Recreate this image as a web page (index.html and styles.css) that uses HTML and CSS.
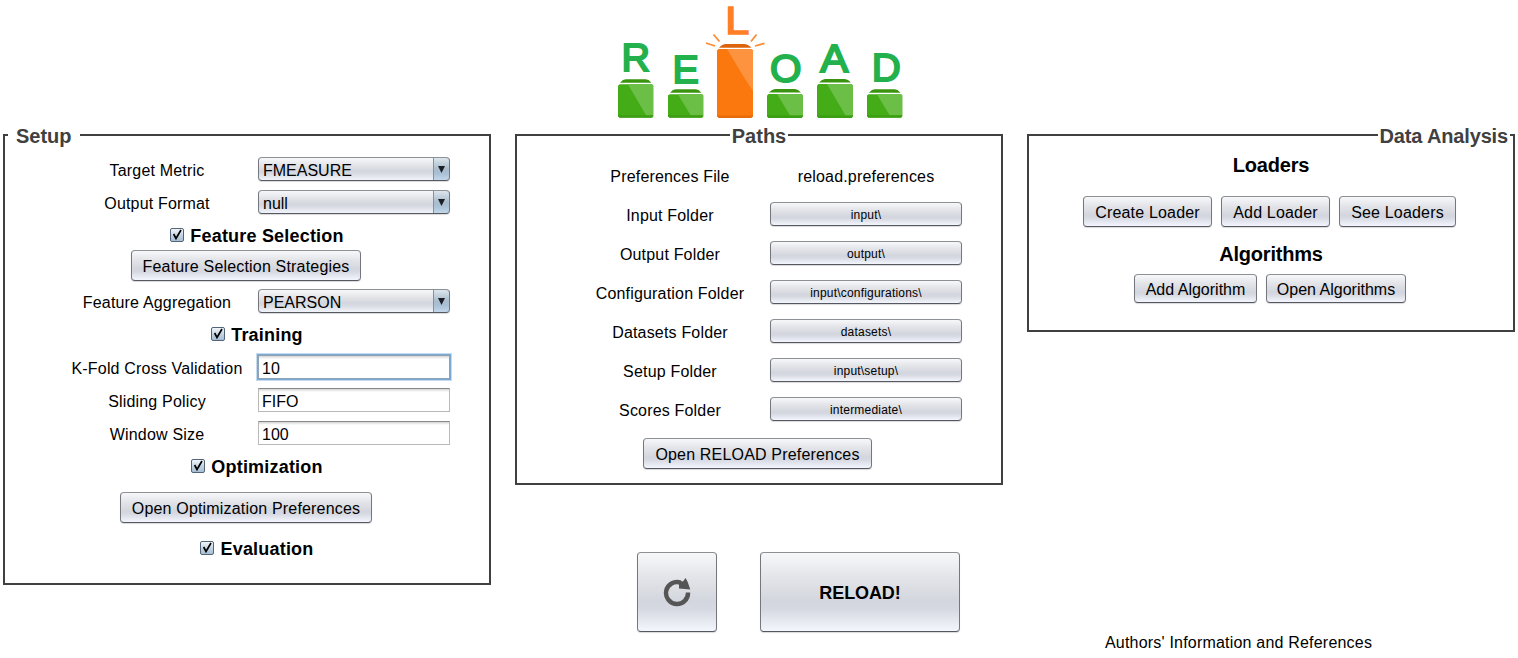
FILE: index.html
```
<!DOCTYPE html>
<html lang="en">
<head>
<meta charset="utf-8">
<title>RELOAD</title>
<link rel="stylesheet" href="styles.css">
</head>
<body>
<svg class="defs" width="0" height="0" aria-hidden="true">
  <symbol id="check" viewBox="0 0 12 12">
    <path d="M2.600 5 L5 9.500 L10 1" fill="none" stroke="#000" stroke-width="1.700"/>
  </symbol>
  <symbol id="bar-short" viewBox="0 0 36 30">
    <path d="M2 4.500 Q5 1 8 1 H28 Q31 1 34 4.500 Z" fill="#3a9410"/>
    <path d="M1.500 6 H34.500 L36 7.500 V28 L34.500 30 H1.500 L0 28 V7.500 Z" fill="#43ac16"/>
    <path d="M10 6 H34.500 L36 7.500 V27.500 H23 Z" fill="#6bbe46"/>
    <path d="M0 27.500 H36 V28.500 L34.500 30 H1.500 L0 28.500 Z" fill="#3a9a12" opacity=".75"/>
  </symbol>
  <symbol id="bar-tall" viewBox="0 0 36 40">
    <path d="M2 4.500 Q5 1 8 1 H28 Q31 1 34 4.500 Z" fill="#3a9410"/>
    <path d="M1.500 6 H34.500 L36 7.500 V38 L34.500 40 H1.500 L0 38 V7.500 Z" fill="#43ac16"/>
    <path d="M10 6 H34.500 L36 7.500 V37.500 H28.500 Z" fill="#6bbe46"/>
    <path d="M0 37.500 H36 V38.500 L34.500 40 H1.500 L0 38.500 Z" fill="#3a9a12" opacity=".75"/>
  </symbol>
</svg>

<header class="header">
  <svg class="logo" width="320" height="126" viewBox="600 0 320 126" role="img" aria-label="RELOAD">
    <g class="logo-text">
      <text x="621.500" y="71.200">R</text>
      <text x="672.500" y="83">E</text>
      <text x="725.200" y="34" class="logo-hot" textLength="24" lengthAdjust="spacingAndGlyphs">L</text>
      <text x="770" y="82.300" textLength="31.500" lengthAdjust="spacingAndGlyphs">O</text>
      <text x="820.200" y="72" textLength="28" lengthAdjust="spacingAndGlyphs">A</text>
      <text x="871.800" y="81" textLength="29" lengthAdjust="spacingAndGlyphs">D</text>
    </g>
    <use href="#bar-tall" x="618" y="78" width="35.500" height="40"/>
    <use href="#bar-short" x="668" y="88" width="35.500" height="30"/>
    <use href="#bar-short" x="767" y="88" width="36" height="30"/>
    <use href="#bar-tall" x="817" y="78" width="36" height="40"/>
    <use href="#bar-short" x="867" y="88" width="35.500" height="30"/>
    <path d="M719 47.800 Q722 44 726 44 H744 Q748 44 751.500 47.800 Z" fill="#dc640c"/>
    <path d="M718.500 49 H751.500 L753 50.500 V116 L751 118 H719 L717 116 V50.500 Z" fill="#fb780f"/>
    <path d="M727 49 H751.500 L753 50.500 V91 L745 79 Z" fill="#fd933f"/>
    <path d="M717 115.500 H753 V116.500 L751 118 H719 L717 116.500 Z" fill="#e86a08"/>
    <path d="M713.500 34.500 L719.500 41.500 M706 43 L715 46 M756.500 34.500 L751 41.500 M764.500 43.300 L755 46" fill="none" stroke="#fb8c35" stroke-width="1.800"/>
  </svg>
</header>

<main class="columns">
  <section class="column">
    <div class="panel setup">
      <h2 class="panel-title title-left">Setup</h2>
      <div class="rows">
        <div class="row pair"><span class="label">Target Metric</span><div class="combo"><span>FMEASURE</span><i class="arrow"></i></div></div>
        <div class="row pair"><span class="label">Output Format</span><div class="combo"><span>null</span><i class="arrow"></i></div></div>
        <div class="row toggle"><svg class="box"><use href="#check"/></svg><b>Feature Selection</b></div>
        <div class="row lift"><button class="btn w230">Feature Selection Strategies</button></div>
        <div class="row pair"><span class="label">Feature Aggregation</span><div class="combo"><span>PEARSON</span><i class="arrow"></i></div></div>
        <div class="row toggle"><svg class="box"><use href="#check"/></svg><b>Training</b></div>
        <div class="row pair"><span class="label">K-Fold Cross Validation</span><div class="field focused">10</div></div>
        <div class="row pair"><span class="label">Sliding Policy</span><div class="field">FIFO</div></div>
        <div class="row pair"><span class="label">Window Size</span><div class="field">100</div></div>
        <div class="row toggle"><svg class="box"><use href="#check"/></svg><b>Optimization</b></div>
        <div class="row roomy"><button class="btn w252">Open Optimization Preferences</button></div>
        <div class="row toggle"><svg class="box"><use href="#check"/></svg><b>Evaluation</b></div>
      </div>
    </div>
  </section>

  <section class="column">
    <div class="panel paths">
      <h2 class="panel-title title-center">Paths</h2>
      <div class="rows">
        <div class="row pair"><span class="label">Preferences File</span><span class="label">reload.preferences</span></div>
        <div class="row pair"><span class="label">Input Folder</span><button class="btn slim">input\</button></div>
        <div class="row pair"><span class="label">Output Folder</span><button class="btn slim">output\</button></div>
        <div class="row pair"><span class="label">Configuration Folder</span><button class="btn slim">input\configurations\</button></div>
        <div class="row pair"><span class="label">Datasets Folder</span><button class="btn slim">datasets\</button></div>
        <div class="row pair"><span class="label">Setup Folder</span><button class="btn slim">input\setup\</button></div>
        <div class="row pair"><span class="label">Scores Folder</span><button class="btn slim">intermediate\</button></div>
        <div class="row roomy"><button class="btn w229">Open RELOAD Preferences</button></div>
      </div>
    </div>
    <div class="actions">
      <button class="btn big square" aria-label="Refresh">
        <svg width="28" height="30" viewBox="0 0 28 30">
          <path d="M17.500 4.600 A11 11 0 1 0 25 14.500" fill="none" stroke="#555" stroke-width="4.400"/>
          <path d="M22.500 0 L24.500 3.500 L27.300 11.500 L16 10.500 V2.500 L20 3.500 Z" fill="#555"/>
        </svg>
      </button>
      <button class="btn big run">RELOAD!</button>
    </div>
  </section>

  <section class="column">
    <div class="panel analysis">
      <h2 class="panel-title title-right">Data Analysis</h2>
      <h3 class="group">Loaders</h3>
      <div class="button-row loaders">
        <button class="btn w129">Create Loader</button>
        <button class="btn w109">Add Loader</button>
        <button class="btn w117">See Loaders</button>
      </div>
      <h3 class="group">Algorithms</h3>
      <div class="button-row algorithms">
        <button class="btn w123">Add Algorithm</button>
        <button class="btn w140">Open Algorithms</button>
      </div>
    </div>
    <div class="credits">Authors' Information and References</div>
  </section>
</main>
</body>
</html>
```
FILE: styles.css
```
* { box-sizing: border-box; }

body {
  margin: 0;
  width: 1518px;
  height: 658px;
  overflow: hidden;
  display: flex;
  flex-direction: column;
  background: #fff;
  color: #000;
  font: 16px/20px "Liberation Sans", Arial, sans-serif;
  letter-spacing: 0.18px;
}

.defs { position: absolute; }

.header { height: 126px; padding-left: 600px; }
.logo { display: block; overflow: visible; }
.logo-text { font-size: 39.5px; line-height: 1; fill: #22b14c; stroke: #22b14c; stroke-width: 2px; letter-spacing: 0; }
.logo-hot { font-size: 38px; fill: #ff7f27; stroke: #ff7f27; stroke-width: 1.6px; }

.columns { flex: 1; display: flex; gap: 24px; padding: 8px 3px 0; }
.column { width: 488px; display: flex; flex-direction: column; }

.panel { border: 2px solid #404040; display: flex; flex-direction: column; }
.setup { height: 451px; }
.paths { height: 351px; }
.analysis { height: 198px; }

.panel-title {
  margin: -11px 0 0;
  height: 23px;
  background: #fff;
  color: #404040;
  font-size: 20px;
  line-height: 22px;
  font-weight: bold;
  letter-spacing: 0;
  white-space: nowrap;
}
.title-left { align-self: flex-start; margin-left: 3px; padding: 0 8px; }
.title-center { align-self: center; padding: 0 2px; }
.title-right { align-self: flex-end; margin-right: 3px; padding: 0 2px; letter-spacing: -0.15px; }

.row { height: 33px; display: flex; align-items: center; justify-content: center; }
.setup .rows { padding-top: 5px; }
.setup .row { padding-right: 2px; }
.pair { display: grid; grid-template-columns: 192px 192px; column-gap: 5px; justify-content: start; }
.setup .pair { padding-left: 56px; }
.label { text-align: center; white-space: nowrap; padding-top: 2px; }
.lift { padding-bottom: 6px; }
.setup .roomy { height: 49px; }
.setup .toggle { padding-left: 22px; padding-bottom: 1px; gap: 6px; font-size: 18px; letter-spacing: 0.2px; }
.toggle b { padding-top: 1px; }

.paths .rows { padding-top: 8px; }
.paths .row { height: 39px; }
.paths .pair { padding-left: 57px; column-gap: 4px; }
.paths .roomy { height: 49px; padding-right: 3px; }

.box {
  width: 14px;
  height: 14px;
  overflow: visible;
  border: 1px solid #526478;
  border-radius: 2px;
  background: linear-gradient(#f2f6f9, #c3d2e0 55%, #a7bfd4);
}

.btn {
  height: 31px;
  padding: 2px 0 0;
  border: 1px solid;
  border-color: #8d9095 #74777e #555861;
  border-radius: 4px;
  background: linear-gradient(#f7f8fa, #e4e5e9 30%, #d3d6de 62%, #d6d9e1 72%, #f3f6fd);
  box-shadow: 0 1px 1px rgba(0, 0, 0, 0.15);
  color: #000;
  font: inherit;
  letter-spacing: inherit;
  white-space: nowrap;
}
.slim { width: 192px; height: 24px; margin-bottom: 1px; font-size: 12px; line-height: 20px; letter-spacing: 0.2px; }
.w109 { width: 109px; }
.w117 { width: 117px; }
.w123 { width: 123px; }
.w129 { width: 129px; }
.w140 { width: 140px; }
.w229 { width: 229px; }
.w230 { width: 230px; }
.w252 { width: 252px; }

.combo {
  height: 24px;
  margin-bottom: 1px;
  display: flex;
  justify-content: space-between;
  border: 1px solid;
  border-color: #8d9095 #74777e #555861;
  border-radius: 4px;
  background: linear-gradient(#f7f8fa, #e1e3e7 35%, #d3d6de 60%, #d9dce3 72%, #f1f4fb);
  box-shadow: 0 1px 1px rgba(0, 0, 0, 0.15);
  overflow: hidden;
}
.combo span { padding: 3px 0 0 4px; letter-spacing: 0; }
.arrow {
  width: 17px;
  margin: -1px -1px -1px 0;
  border: 1px solid #3f5a76;
  border-left-color: #7d93a8;
  border-radius: 0 4px 4px 0;
  background: linear-gradient(#dde6ed, #a9bccd 50%, #a9c0d5 70%, #c2d7ea);
}
.arrow::before {
  content: "";
  display: block;
  margin: 8px 0 0 4px;
  width: 7px;
  height: 7px;
  background: #1b1f24;
  clip-path: polygon(0 0, 100% 0, 50% 100%);
}

.field {
  height: 24px;
  margin-bottom: 1px;
  padding: 4px 0 0 3px;
  line-height: 18px;
  letter-spacing: 0;
  border: 1px solid #b9b9b9;
  border-top-color: #888;
  background: linear-gradient(#d4d4d4, #fff 3px);
}
.focused { box-shadow: 0 0 0 1px #7ba9d6, 0 0 0 2px #c5dcf0; border-color: #8fa3b5; }

.actions { display: flex; gap: 43px; padding: 67px 0 0 122px; }
.big { height: 80px; padding-top: 2px; font-size: 18px; font-weight: bold; letter-spacing: -0.1px; }
.square { width: 80px; display: flex; align-items: center; justify-content: center; }
.run { width: 200px; }

.group { margin: 0; text-align: center; font-size: 20px; line-height: 24px; letter-spacing: -0.2px; }
.analysis .group { padding-top: 5px; height: 48px; }
.analysis .loaders + .group { padding-top: 15px; height: 47px; }
.button-row { display: flex; gap: 9px; }
.loaders { padding-left: 54px; }
.algorithms { padding-left: 105px; letter-spacing: 0; }
.algorithms .btn { height: 29px; }
.credits { margin-top: auto; padding: 0 0 5px 78px; letter-spacing: 0.2px; }
```
